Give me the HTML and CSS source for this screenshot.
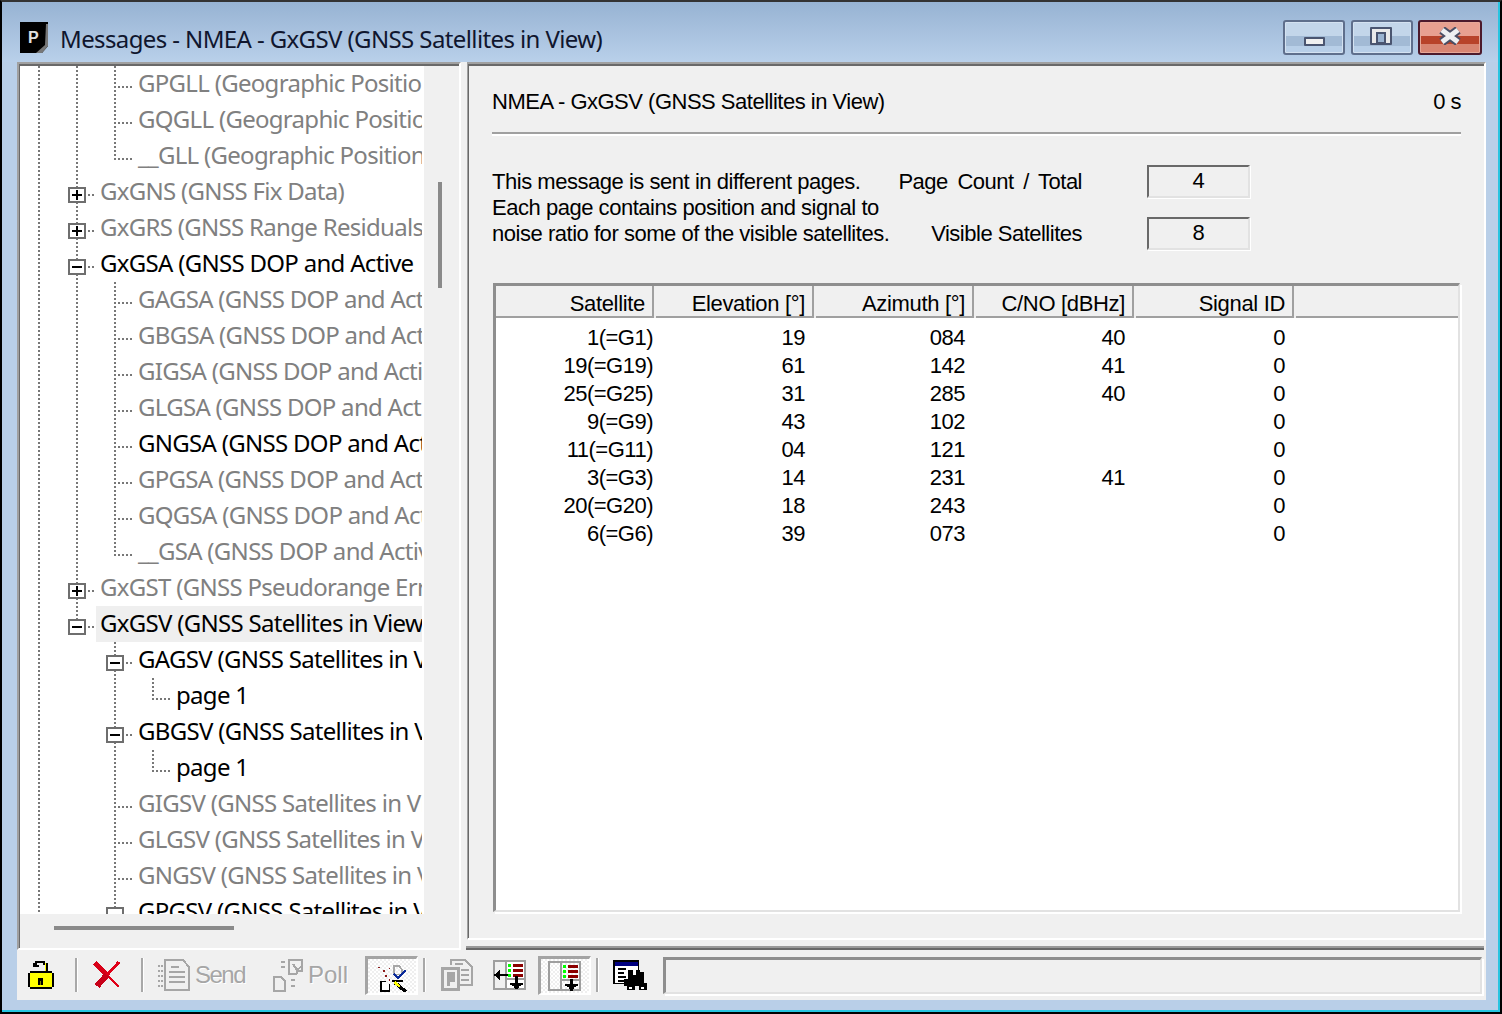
FILE: index.html
```html
<!DOCTYPE html>
<html lang="en">
<head>
<meta charset="utf-8">
<title>Messages - NMEA - GxGSV</title>
<link rel="stylesheet" href="styles.css">
</head>
<body>
<div class="window">
  <div class="frame">
    <header class="titlebar">
      <svg class="logo" width="28" height="31" viewBox="0 0 28 31"><path d="M0 0H28V24L22 31H0Z" fill="#000"/><path d="M26 2H28V24L22 31H16L25 23Z" fill="#777"/><text x="8" y="21" class="logo-p">P</text></svg>
      <h1 class="title">Messages - NMEA - GxGSV (GNSS Satellites in View)</h1>
      <div class="winbtns">
        <div class="winbtn"><span class="ic-min"></span></div>
        <div class="winbtn"><span class="ic-max"></span></div>
        <div class="winbtn close"><svg class="ic-close" width="24" height="18" viewBox="0 0 24 18"><path d="M4 3L20 15M20 3L4 15" stroke="#4a4f66" stroke-width="9" fill="none"/><path d="M4 3L20 15M20 3L4 15" stroke="#eef0f2" stroke-width="5" fill="none"/></svg></div>
      </div>
    </header>
    <div class="client">
      <div class="split">
        <aside class="tree-pane">
          <div class="tree-frame">
            <div class="tree-col">
              <div class="tree">
                <div class="row off"><i class="c g"></i><i class="c g"></i><i class="c t"></i><span class="lb">GPGLL (Geographic Position</span></div>
                <div class="row off"><i class="c g"></i><i class="c g"></i><i class="c t"></i><span class="lb">GQGLL (Geographic Position</span></div>
                <div class="row off"><i class="c g"></i><i class="c g"></i><i class="c l"></i><span class="lb">__GLL (Geographic Position</span></div>
                <div class="row off"><i class="c g"></i><i class="c t"><b class="box plus"></b></i><span class="lb">GxGNS (GNSS Fix Data)</span></div>
                <div class="row off"><i class="c g"></i><i class="c t"><b class="box plus"></b></i><span class="lb">GxGRS (GNSS Range Residuals)</span></div>
                <div class="row"><i class="c g"></i><i class="c t"><b class="box"></b></i><span class="lb">GxGSA (GNSS DOP and Active</span></div>
                <div class="row off"><i class="c g"></i><i class="c g"></i><i class="c t"></i><span class="lb">GAGSA (GNSS DOP and Active</span></div>
                <div class="row off"><i class="c g"></i><i class="c g"></i><i class="c t"></i><span class="lb">GBGSA (GNSS DOP and Active</span></div>
                <div class="row off"><i class="c g"></i><i class="c g"></i><i class="c t"></i><span class="lb">GIGSA (GNSS DOP and Active</span></div>
                <div class="row off"><i class="c g"></i><i class="c g"></i><i class="c t"></i><span class="lb">GLGSA (GNSS DOP and Active</span></div>
                <div class="row"><i class="c g"></i><i class="c g"></i><i class="c t"></i><span class="lb">GNGSA (GNSS DOP and Active</span></div>
                <div class="row off"><i class="c g"></i><i class="c g"></i><i class="c t"></i><span class="lb">GPGSA (GNSS DOP and Active</span></div>
                <div class="row off"><i class="c g"></i><i class="c g"></i><i class="c t"></i><span class="lb">GQGSA (GNSS DOP and Active</span></div>
                <div class="row off"><i class="c g"></i><i class="c g"></i><i class="c l"></i><span class="lb">__GSA (GNSS DOP and Active</span></div>
                <div class="row off"><i class="c g"></i><i class="c t"><b class="box plus"></b></i><span class="lb">GxGST (GNSS Pseudorange Error</span></div>
                <div class="row sel"><i class="c g"></i><i class="c l"><b class="box"></b></i><span class="lb">GxGSV (GNSS Satellites in View</span></div>
                <div class="row"><i class="c g"></i><i class="c"></i><i class="c t"><b class="box"></b></i><span class="lb">GAGSV (GNSS Satellites in View</span></div>
                <div class="row"><i class="c g"></i><i class="c"></i><i class="c g"></i><i class="c l"></i><span class="lb">page 1</span></div>
                <div class="row"><i class="c g"></i><i class="c"></i><i class="c t"><b class="box"></b></i><span class="lb">GBGSV (GNSS Satellites in View</span></div>
                <div class="row"><i class="c g"></i><i class="c"></i><i class="c g"></i><i class="c l"></i><span class="lb">page 1</span></div>
                <div class="row off"><i class="c g"></i><i class="c"></i><i class="c t"></i><span class="lb">GIGSV (GNSS Satellites in View</span></div>
                <div class="row off"><i class="c g"></i><i class="c"></i><i class="c t"></i><span class="lb">GLGSV (GNSS Satellites in View</span></div>
                <div class="row off"><i class="c g"></i><i class="c"></i><i class="c t"></i><span class="lb">GNGSV (GNSS Satellites in View</span></div>
                <div class="row"><i class="c g"></i><i class="c"></i><i class="c t"><b class="box"></b></i><span class="lb">GPGSV (GNSS Satellites in View</span></div>
              </div>
              <div class="hbar"><span class="hthumb"></span></div>
            </div>
            <div class="vbar"><span class="vthumb"></span></div>
          </div>
        </aside>
        <main class="right">
          <section class="panel">
            <div class="panel-in">
              <div class="head"><span>NMEA - GxGSV (GNSS Satellites in View)</span><span>0 s</span></div>
              <div class="rule"></div>
              <div class="info">
                <p class="para">This message is sent in different pages.<br>Each page contains position and signal to<br>noise ratio for some of the visible satellites.</p>
                <span class="lab wide">Page Count / Total</span><span class="val">4</span>
                <span class="lab">Visible Satellites</span><span class="val">8</span>
              </div>
              <div class="table">
                <div class="thead">
                  <div class="th">Satellite</div><div class="th">Elevation [°]</div><div class="th">Azimuth [°]</div><div class="th">C/NO [dBHz]</div><div class="th">Signal ID</div><div class="th fill"></div>
                </div>
                <div class="tbody">
                  <div class="tr"><span>1(=G1)</span><span>19</span><span>084</span><span>40</span><span>0</span></div>
                  <div class="tr"><span>19(=G19)</span><span>61</span><span>142</span><span>41</span><span>0</span></div>
                  <div class="tr"><span>25(=G25)</span><span>31</span><span>285</span><span>40</span><span>0</span></div>
                  <div class="tr"><span>9(=G9)</span><span>43</span><span>102</span><span></span><span>0</span></div>
                  <div class="tr"><span>11(=G11)</span><span>04</span><span>121</span><span></span><span>0</span></div>
                  <div class="tr"><span>3(=G3)</span><span>14</span><span>231</span><span>41</span><span>0</span></div>
                  <div class="tr"><span>20(=G20)</span><span>18</span><span>243</span><span></span><span>0</span></div>
                  <div class="tr"><span>6(=G6)</span><span>39</span><span>073</span><span></span><span>0</span></div>
                </div>
              </div>
            </div>
          </section>
          <div class="divider"></div>
        </main>
      </div>
      <footer class="toolbar">
        <svg class="ti m-lock" width="28" height="32" viewBox="0 0 28 32" shape-rendering="crispEdges"><path d="M5 6V4H7V2H17V4H20V14H17V6H15V4H9V6H11V8H5Z" fill="#000"/><path d="M17 4H18V12H17Z" fill="#ff0"/><path d="M2 12H24V14H26V28H24V30H2V28H0V14H2Z" fill="#000"/><path d="M2 14H24V28H2Z" fill="#ff0"/><path d="M10 19H15V26H10Z" fill="#000"/><path d="M12 22H13V26H12Z" fill="#808000"/></svg>
        <span class="sep m-s1"></span>
        <svg class="ti m-x" width="30" height="30" viewBox="0 0 30 30" shape-rendering="crispEdges"><path d="M3 3L27 27" stroke="#e00018" stroke-width="2" fill="none"/><path d="M3 3L15 15" stroke="#d80018" stroke-width="5" fill="none"/><path d="M5 26L27 2" stroke="#e00018" stroke-width="3" fill="none"/><path d="M5 26L15 15" stroke="#c80018" stroke-width="6" fill="none"/></svg>
        <span class="sep m-s2"></span>
        <svg class="ti m-send" width="34" height="34" viewBox="0 0 34 34" shape-rendering="crispEdges" fill="none" stroke="#a6a6a6" stroke-width="2"><path d="M8 2H26L32 9V32H8ZM12 14H28M12 19H28M12 24H28M14 9H22" /><path d="M1 8H6M1 13H6M1 18H6M1 23H6M1 28H6" stroke-dasharray="2 1"/></svg>
        <span class="tl m-tsend">Send</span>
        <svg class="ti m-poll" width="34" height="34" viewBox="0 0 34 34" shape-rendering="crispEdges" fill="none" stroke="#a6a6a6" stroke-width="2"><path d="M3 19H10L14 23V33H3Z"/><path d="M18 2H31V13H27L25 16H18Z"/><path d="M22 6L26 12L31 8" stroke="#a6a6a6"/><path d="M10 4H14M10 9H14M20 22H24M20 28H24"/></svg>
        <span class="tl m-tpoll">Poll</span>
        <div class="toggle m-t1"><svg class="ic-tool" width="32" height="28" viewBox="0 0 36 32" shape-rendering="crispEdges"><path d="M2 3H4V5H2ZM8 7H10V9H8ZM14 4H16V6H14ZM10 13H12V15H10ZM14 17H16V19H14Z" fill="#8b1a1a"/><path d="M20 2H26L29 6V12H20Z" fill="none" stroke="#a6a6a6" stroke-width="2"/><path d="M20 11L25 16L34 7" fill="none" stroke="#0a2a9a" stroke-width="3"/><path d="M18 18H30V20H18Z" fill="#000"/><path d="M4 19H10L15 24V32H4Z" fill="#fff"/><path d="M4 19H11V21H6V30H16V32H4ZM14 23H16V32H14ZM6 19" fill="#000"/><path d="M21 21L34 32" stroke="#000" stroke-width="4" fill="none"/><path d="M21 21L27 26" stroke="#ff0" stroke-width="3" fill="none"/></svg></div>
        <span class="sep m-s3"></span>
        <svg class="ti m-copy" width="34" height="34" viewBox="0 0 34 34" shape-rendering="crispEdges" fill="none" stroke="#a6a6a6" stroke-width="2"><path d="M11 7V2H25L32 9V27H20"/><path d="M2 10H18V31H2Z" stroke-width="3"/><path d="M7 14H15V24H10V28H7Z" fill="#a6a6a6" stroke="none"/><path d="M21 12H29M21 17H29M21 22H29M15 6H23"/></svg>
        <svg class="ti m-split" width="34" height="32" viewBox="0 0 34 32" shape-rendering="crispEdges"><path d="M1 2H32V30H1Z" fill="#f0f0f0" stroke="#9e9e9e" stroke-width="2"/><path d="M12 2H14V30H12ZM14 19H32V21H14Z" fill="#9e9e9e"/><path d="M14 3H31V19H14ZM14 21H31V29H14Z" fill="#fff"/><path d="M15 5H18V8H15ZM15 10H18V13H15ZM15 15H18V18H15Z" fill="#0f0"/><path d="M20 5H30V8H20ZM20 10H30V13H20ZM20 15H30V18H20Z" fill="#8b0000"/><path d="M1 15H15V17H1Z" fill="#000"/><path d="M1 16L7 10V22Z" fill="#000"/><path d="M22 17H25V30H22ZM17 24H30V26H28V27H26V29H21V27H19V26H17Z" fill="#000"/></svg>
        <div class="toggle m-t2"><svg width="34" height="32" viewBox="0 0 34 32" shape-rendering="crispEdges"><path d="M1 2H32V30H1Z" fill="none" stroke="#9e9e9e" stroke-width="2"/><path d="M12 2H14V30H12ZM14 19H32V21H14Z" fill="#9e9e9e"/><path d="M15 5H18V8H15ZM15 10H18V13H15ZM15 15H18V18H15Z" fill="#0f0"/><path d="M20 5H30V8H20ZM20 10H30V13H20ZM20 15H30V18H20Z" fill="#8b0000"/><path d="M22 19H25V31H22ZM17 24H30V26H28V27H26V29H21V27H19V26H17Z" fill="#000"/></svg></div>
        <span class="sep m-s4"></span>
        <svg class="ti m-bin" width="34" height="30" viewBox="0 0 36 32" shape-rendering="crispEdges"><path d="M1 1H27V25H1Z" fill="#fff" stroke="#000" stroke-width="2"/><path d="M2 2H26V6H2Z" fill="#000080"/><path d="M5 9H14V11H5ZM5 13H12V15H5ZM5 17H14V19H5ZM5 21H12V23H5Z" fill="#000"/><path d="M16 11H21V16H24V11H29V13H33V24H36V32H28V28H23V32H15V28H12V20H16Z" fill="#000"/><path d="M17 29H20V31H17ZM30 29H33V31H30Z" fill="#fff"/></svg>
        <div class="status"></div>
      </footer>
    </div>
  </div>
</div>
</body>
</html>
```
FILE: styles.css
```css
* { box-sizing: border-box; }
html, body { margin: 0; padding: 0; }
body { width: 1502px; height: 1014px; overflow: hidden; background: #000; }
.window { width: 1502px; height: 1014px; border: 2px solid #000; border-top-color: #333; }
.frame { height: 100%; border-right: 2px solid #27c4e0; border-bottom: 2px solid #27c4e0; background: #b9cfe8; display: flex; flex-direction: column; }
.titlebar { height: 60px; flex: none; display: flex; align-items: flex-start; padding: 0 16px 0 18px; background: linear-gradient(#97b3d3, #b9d0ea); }
.logo { margin-top: 20px; flex: none; }
.logo-p { font: bold 16px "Liberation Sans", sans-serif; fill: #e0e0e0; }
.title { margin: 21px 0 0 12px; font: 400 24px/32px "Noto Sans", sans-serif; color: #10162e; letter-spacing: -0.61px; flex: 1; white-space: nowrap; }
.winbtns { display: flex; gap: 6px; margin-top: 18px; }
.winbtn { width: 62px; height: 35px; border: 2px solid #5f6f8c; border-radius: 3px; display: flex; align-items: center; justify-content: center; background: linear-gradient(#c3d6ea 0 46%, #a2bad5 46% 76%, #b8cfe8 76%); box-shadow: inset 0 0 0 1px #d4e2f1; }
.winbtn.close { width: 64px; margin-left: -1px; border-color: #4c1a2c; background: linear-gradient(#e8a090 0 46%, #b8432a 46% 72%, #d88572 72%); box-shadow: inset 0 0 0 1px #e6a898; }
.ic-min { width: 21px; height: 9px; margin-top: 7px; border: 2px solid #4a5570; background: #f0f0f0; border-radius: 1px; }
.ic-max { width: 22px; height: 18px; margin-top: -4px; margin-left: -2px; border: 2px solid #4a5570; background: #eaeaea; padding: 3px 4px; border-radius: 1px; }
.ic-max::before { content: ""; display: block; height: 8px; border: 2px solid #4a5570; background: #9bb4d1; }
.ic-close { margin-top: -4px; }

.client { flex: 1; margin: 0 12px 10px 15px; background: #f0f0f0; display: flex; flex-direction: column; min-height: 0; }
.split { height: 888px; flex: none; display: flex; }
.tree-pane { width: 444px; flex: none; border-top: 2px solid #a0a0a0; border-left: 2px solid #a0a0a0; border-right: 2px solid #fff; border-bottom: 2px solid #fff; }
.tree-frame { height: 100%; border-top: 2px solid #696969; border-left: 1px solid #696969; display: flex; }
.tree-col { width: 404px; flex: none; display: flex; flex-direction: column; }
.tree { height: 848px; flex: none; overflow: hidden; background: #fff; }
.row { height: 36px; display: flex; font: 400 24px/34px "Noto Sans", sans-serif; letter-spacing: -0.7px; color: #000; padding-right: 2px; }
.row.off { color: #808080; }
.c { width: 38px; height: 36px; flex: none; display: block; background-repeat: no-repeat; }
.g { background-image: repeating-linear-gradient(#777 0 2px, transparent 2px 4px); background-size: 2px 100%; background-position: 18px 0; }
.t, .l { background-image: repeating-linear-gradient(#777 0 2px, transparent 2px 4px), repeating-linear-gradient(90deg, #777 0 2px, transparent 2px 4px); background-position: 18px 0, 18px 20px; }
.t { background-size: 2px 100%, 18px 2px; }
.l { background-size: 2px 20px, 18px 2px; }
.box { display: block; width: 18px; height: 16px; margin: 13px 0 0 10px; border: 2px solid #6e6e6e; background: linear-gradient(#000, #000) center / 10px 2px no-repeat, #fff; }
.box.plus { background: linear-gradient(#000, #000) center / 10px 2px no-repeat, linear-gradient(#000, #000) center / 2px 10px no-repeat, #fff; }
.lb { flex: 1; min-width: 0; overflow: hidden; white-space: nowrap; padding-left: 4px; }
.row.sel .lb { background: #efefef; }
.hbar { flex: 1; padding: 12px 0 0 34px; }
.hthumb { display: block; width: 180px; height: 4px; background: #8a8a8a; }
.vbar { padding: 116px 0 0 14px; }
.vthumb { display: block; width: 4px; height: 106px; background: #8a8a8a; }

.right { flex: 1; margin-left: 5px; display: flex; flex-direction: column; min-width: 0; }
.panel { flex: 1; margin-left: 1px; min-height: 0; border-top: 2px solid #a0a0a0; border-left: 1px solid #a0a0a0; border-right: 2px solid #fff; border-bottom: 2px solid #fff; }
.panel-in { height: 100%; border-top: 2px solid #696969; border-left: 1px solid #696969; padding: 0 23px; display: flex; flex-direction: column; font: 400 22px/26px "Liberation Sans", sans-serif; color: #000; }
.head { display: flex; justify-content: space-between; padding: 23px 0 17px; letter-spacing: -0.5px; }
.rule { height: 4px; border-top: 2px solid #a0a0a0; border-bottom: 2px solid #fff; flex: none; }
.info { margin-top: 29px; display: grid; grid-template-columns: 400px 190px 103px; column-gap: 0; grid-template-rows: 33px 33px; row-gap: 19px; align-items: center; flex: none; }
.para { grid-row: 1 / span 2; grid-column: 1; margin: 0; align-self: start; padding-top: 4px; letter-spacing: -0.47px; white-space: nowrap; }
.lab { grid-column: 2; text-align: right; letter-spacing: -0.5px; }
.lab.wide { word-spacing: 4px; }
.val { grid-column: 3; margin-left: 65px; width: 103px; height: 33px; border-top: 2px solid #696969; border-left: 2px solid #696969; border-right: 2px solid #e2e2e2; border-bottom: 2px solid #e2e2e2; box-shadow: 1px 1px 0 #fff; text-align: center; line-height: 28px; }
.table { flex: 1; margin: 33px 1px 26px; min-height: 0; background: #fff; border-top: 3px solid #8e8e8e; border-left: 3px solid #8e8e8e; border-right: 2px solid #e2e2e2; border-bottom: 2px solid #e2e2e2; box-shadow: 2px 2px 0 #fff; }
.thead { display: flex; height: 32px; background: #f0f0f0; letter-spacing: -0.33px; }
.th { width: 158px; flex: none; height: 32px; padding: 5px 7px 0 0; text-align: right; border-right: 2px solid #a0a0a0; border-bottom: 2px solid #a0a0a0; margin-right: 2px; white-space: nowrap; }
.th.fill { flex: 1; border-right: 0; margin: 0; }
.tbody { padding-top: 6px; }
.tr { display: flex; height: 28px; line-height: 28px; letter-spacing: -0.5px; }
.tr span { width: 160px; flex: none; text-align: right; padding-right: 11px; }
.tr span:first-child { padding-right: 3px; }

.divider { height: 4px; flex: none; margin: 6px 2px 0 0; border-top: 2px solid #9a9a9a; border-bottom: 2px solid #696969; }

.toolbar { flex: 1; display: flex; align-items: center; padding-right: 4px; }
.ti { flex: none; display: block; }
.sep { width: 3px; height: 34px; flex: none; background: #a8a8a8; border-right: 1px solid #fff; }
.tl { flex: none; font: 400 24px/30px "Liberation Sans", sans-serif; color: #a6a6a6; text-shadow: 1px 1px 0 #fff; }
.toggle { flex: none; width: 53px; height: 39px; display: flex; align-items: center; justify-content: center; border-top: 3px solid #a4a4a4; border-left: 3px solid #a4a4a4; border-right: 2px solid #fff; border-bottom: 2px solid #fff; background: repeating-conic-gradient(#fff 0 25%, #efefef 0 50%) 0 0 / 4px 4px; }
.ic-tool { margin-top: 4px; }
.m-lock { margin-left: 11px; }
.m-s1 { margin-left: 19px; }
.m-x { margin-left: 14px; }
.m-s2 { margin-left: 19px; }
.m-send { margin-left: 13px; }
.m-tsend { margin-left: 4px; letter-spacing: -1.5px; width: 50px; }
.m-poll { margin-left: 26px; }
.m-tpoll { margin-left: 3px; width: 40px; }
.m-t1 { margin-left: 17px; }
.m-s3 { margin-left: 5px; }
.m-copy { margin-left: 14px; }
.m-split { margin-left: 19px; }
.m-t2 { margin-left: 11px; }
.m-s4 { margin-left: 5px; }
.m-bin { margin-left: 14px; }
.status { flex: 1; margin-left: 16px; height: 37px; border-top: 3px solid #8e8e8e; border-left: 3px solid #8e8e8e; border-right: 2px solid #e2e2e2; border-bottom: 2px solid #e2e2e2; box-shadow: 2px 2px 0 #fff; }
```
